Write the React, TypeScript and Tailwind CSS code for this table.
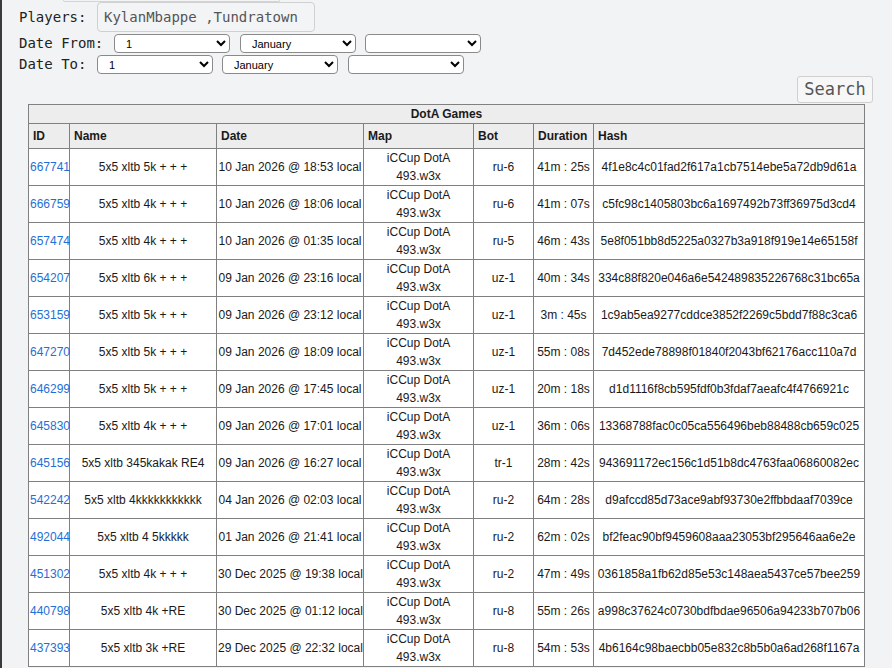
import React from "react";

type Game = {
  id: string;
  name: string;
  date: string;
  bot: string;
  duration: string;
  hash: string;
};

const games: Game[] = [
  { id: "667741", name: "5x5 xltb 5k + + +", date: "10 Jan 2026 @ 18:53 local", bot: "ru-6", duration: "41m : 25s", hash: "4f1e8c4c01fad2f617a1cb7514ebe5a72db9d61a" },
  { id: "666759", name: "5x5 xltb 4k + + +", date: "10 Jan 2026 @ 18:06 local", bot: "ru-6", duration: "41m : 07s", hash: "c5fc98c1405803bc6a1697492b73ff36975d3cd4" },
  { id: "657474", name: "5x5 xltb 4k + + +", date: "10 Jan 2026 @ 01:35 local", bot: "ru-5", duration: "46m : 43s", hash: "5e8f051bb8d5225a0327b3a918f919e14e65158f" },
  { id: "654207", name: "5x5 xltb 6k + + +", date: "09 Jan 2026 @ 23:16 local", bot: "uz-1", duration: "40m : 34s", hash: "334c88f820e046a6e542489835226768c31bc65a" },
  { id: "653159", name: "5x5 xltb 5k + + +", date: "09 Jan 2026 @ 23:12 local", bot: "uz-1", duration: "3m : 45s", hash: "1c9ab5ea9277cddce3852f2269c5bdd7f88c3ca6" },
  { id: "647270", name: "5x5 xltb 5k + + +", date: "09 Jan 2026 @ 18:09 local", bot: "uz-1", duration: "55m : 08s", hash: "7d452ede78898f01840f2043bf62176acc110a7d" },
  { id: "646299", name: "5x5 xltb 5k + + +", date: "09 Jan 2026 @ 17:45 local", bot: "uz-1", duration: "20m : 18s", hash: "d1d1116f8cb595fdf0b3fdaf7aeafc4f4766921c" },
  { id: "645830", name: "5x5 xltb 4k + + +", date: "09 Jan 2026 @ 17:01 local", bot: "uz-1", duration: "36m : 06s", hash: "13368788fac0c05ca556496beb88488cb659c025" },
  { id: "645156", name: "5x5 xltb 345kakak RE4", date: "09 Jan 2026 @ 16:27 local", bot: "tr-1", duration: "28m : 42s", hash: "943691172ec156c1d51b8dc4763faa06860082ec" },
  { id: "542242", name: "5x5 xltb 4kkkkkkkkkkk", date: "04 Jan 2026 @ 02:03 local", bot: "ru-2", duration: "64m : 28s", hash: "d9afccd85d73ace9abf93730e2ffbbdaaf7039ce" },
  { id: "492044", name: "5x5 xltb 4 5kkkkk", date: "01 Jan 2026 @ 21:41 local", bot: "ru-2", duration: "62m : 02s", hash: "bf2feac90bf9459608aaa23053bf295646aa6e2e" },
  { id: "451302", name: "5x5 xltb 4k + + +", date: "30 Dec 2025 @ 19:38 local", bot: "ru-2", duration: "47m : 49s", hash: "0361858a1fb62d85e53c148aea5437ce57bee259" },
  { id: "440798", name: "5x5 xltb 4k +RE", date: "30 Dec 2025 @ 01:12 local", bot: "ru-8", duration: "55m : 26s", hash: "a998c37624c0730bdfbdae96506a94233b707b06" },
  { id: "437393", name: "5x5 xltb 3k +RE", date: "29 Dec 2025 @ 22:32 local", bot: "ru-8", duration: "54m : 53s", hash: "4b6164c98baecbb05e832c8b5b0a6ad268f1167a" },
];

const mono = "font-['DejaVu_Sans_Mono',monospace]";
const selectCls =
  "w-[116px] h-[19px] bg-white border border-[#8a8a8a] rounded-[4px] pl-[7px] text-[11px] leading-none text-black font-['Liberation_Sans',Arial,sans-serif]";

function DateSelects({ gaps }: { gaps: [string, string] }) {
  return (
    <>
      <select className={selectCls} defaultValue="1">
        <option value="1">1</option>
      </select>
      <select className={`${selectCls} ${gaps[0]}`} defaultValue="January">
        <option>January</option>
      </select>
      <select className={`${selectCls} ${gaps[1]}`} defaultValue="">
        <option value=""></option>
      </select>
    </>
  );
}

export default function App() {
  const th = "border border-[#808080] text-left font-bold px-[4px] py-[3px] leading-[18px]";
  const td = "border border-[#808080] text-center align-middle px-[1px] py-0 leading-[18px]";

  return (
    <div className="min-h-screen bg-[#f2f3f5] border-l-2 border-[#3a3a3a] pl-[17px] text-[#222]">
      {/* scrolled-off field above */}
      <div className="ml-[44px] w-[217px] h-[2px] border-b border-x border-[#d4d4d4] rounded-b-[4px]" />

      {/* Players */}
      <div className={`flex items-center h-[30px] ${mono} text-[14px] leading-[19px]`}>
        <span className="w-[78px]">Players:</span>
        <input
          readOnly
          value="KylanMbappe ,Tundratown"
          className={`w-[218px] h-[30px] border border-[#d0d0d0] rounded-[4px] px-[6px] text-[#555] ${mono} text-[14px] bg-[#f3f4f6]`}
        />
      </div>

      {/* Date from */}
      <div className={`flex items-center h-[19px] mt-[2px] ${mono} text-[14px] leading-[19px]`}>
        <span className="w-[95px]">Date From:</span>
        <DateSelects gaps={["ml-[10px]", "ml-[9px]"]} />
      </div>

      {/* Date to */}
      <div className={`flex items-center h-[19px] mt-[2px] ${mono} text-[14px] leading-[19px]`}>
        <span className="w-[78px]">Date To:</span>
        <DateSelects gaps={["ml-[9px]", "ml-[10px]"]} />
      </div>

      <div className="w-[854px] flex justify-end mt-[2px]">
        <button
          className={`w-[76px] h-[27px] border border-[#cfcfcf] rounded-[3px] bg-[#f7f7f8] text-[#555] ${mono} text-[17px] leading-none`}
        >
          Search
        </button>
      </div>

      <table className="ml-[9px] mt-[1px] w-[837px] border-collapse bg-white text-[12px] font-['Liberation_Sans',Arial,sans-serif] text-[#1a1a1a] table-fixed">
        <colgroup>
          <col className="w-[41px]" />
          <col className="w-[147px]" />
          <col className="w-[147px]" />
          <col className="w-[110px]" />
          <col className="w-[60px]" />
          <col className="w-[60px]" />
          <col />
        </colgroup>
        <thead>
          <tr className="bg-[#ededed]">
            <th colSpan={7} className="border border-[#808080] text-center font-bold py-0 leading-[18px]">
              DotA Games
            </th>
          </tr>
          <tr className="bg-[#ededed]">
            <th className={th}>ID</th>
            <th className={th}>Name</th>
            <th className={th}>Date</th>
            <th className={th}>Map</th>
            <th className={th}>Bot</th>
            <th className={th}>Duration</th>
            <th className={th}>Hash</th>
          </tr>
        </thead>
        <tbody>
          {games.map((g) => (
            <tr key={g.id}>
              <td className="border border-[#808080] text-left align-middle px-[1px] py-0 leading-[18px]">
                <a href="#" className="text-[#1f6fd6]">
                  {g.id}
                </a>
              </td>
              <td className={td}>{g.name}</td>
              <td className={`${td} whitespace-nowrap`}>{g.date}</td>
              <td className={td}>
                iCCup DotA
                <br />
                493.w3x
              </td>
              <td className={td}>{g.bot}</td>
              <td className={`${td} whitespace-nowrap`}>{g.duration}</td>
              <td className={td}>{g.hash}</td>
            </tr>
          ))}
        </tbody>
      </table>
    </div>
  );
}
